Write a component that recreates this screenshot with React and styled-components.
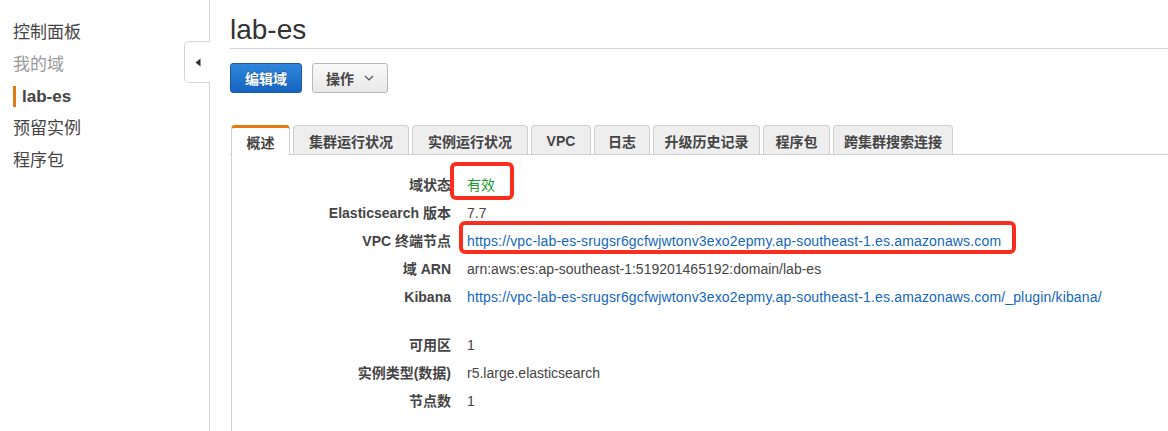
import React from "react";
import styled, { createGlobalStyle } from "styled-components";

const Global = createGlobalStyle`
  html, body { margin: 0; padding: 0; background: #fff; }
  body {
    font-family: "Liberation Sans", "Noto Sans CJK SC", Arial, sans-serif;
    color: #444;
  }
`;

const Page = styled.div`
  display: flex;
  width: 1168px;
  height: 431px;
  overflow: hidden;
`;

const Sidebar = styled.nav`
  position: relative;
  width: 209px;
  flex: none;
  border-right: 1px solid #d5d5d5;
  padding-top: 17px;
  box-sizing: content-box;
`;

const NavItem = styled.div`
  position: relative;
  height: 32px;
  line-height: 32px;
  padding-left: ${(p) => (p.$active ? 22 : 13)}px;
  font-size: 17px;
  font-weight: ${(p) => (p.$active ? 700 : 400)};
  color: ${(p) => (p.$muted ? "#9a9a9a" : "#444")};
  &::before {
    content: "";
    display: ${(p) => (p.$active ? "block" : "none")};
    position: absolute;
    left: 13px;
    top: 5px;
    width: 3px;
    height: 21px;
    background: #e07a12;
  }
`;

const CollapseTab = styled.div`
  position: absolute;
  left: 184px;
  top: 41px;
  width: 26px;
  height: 42px;
  background: #fff;
  border: 1px solid #d5d5d5;
  border-right: none;
  border-radius: 5px 0 0 5px;
  box-sizing: border-box;
  display: flex;
  align-items: center;
  justify-content: center;
`;

const Main = styled.main`
  flex: 1;
  padding-left: 20px;
  min-width: 0;
`;

const Title = styled.h1`
  margin: 0;
  padding-top: 12px;
  line-height: 36px;
  font-size: 28px;
  font-weight: 400;
  color: #333;
  border-bottom: 1px solid #d5d5d5;
`;

const Toolbar = styled.div`
  display: flex;
  gap: 10px;
  margin-top: 14px;
`;

const Button = styled.button`
  height: 30px;
  padding: 0;
  border-radius: 3px;
  font-family: inherit;
  font-size: 14px;
  font-weight: 700;
  white-space: nowrap;
  display: flex;
  align-items: center;
  justify-content: center;
  gap: 10px;
  cursor: pointer;
  color: ${(p) => (p.$primary ? "#fff" : "#444")};
  border: 1px solid ${(p) => (p.$primary ? "#1b5aa3" : "#b8b8b8")};
  background: ${(p) =>
    p.$primary
      ? "linear-gradient(#2f86dc, #1664c0)"
      : "linear-gradient(#fafafa, #e8e8e8)"};
  text-shadow: ${(p) => (p.$primary ? "0 -1px 0 rgba(0,0,0,0.25)" : "none")};
  width: ${(p) => p.$w}px;
`;

const Tabs = styled.div`
  display: flex;
  align-items: flex-end;
  gap: 3px;
  margin-top: 31px;
  padding-left: 1px;
  border-bottom: 1px solid #cfcfcf;
  height: 30px;
`;

const Tab = styled.div`
  height: ${(p) => (p.$active ? 30 : 29)}px;
  box-sizing: border-box;
  width: ${(p) => p.$w}px;
  display: flex;
  align-items: center;
  justify-content: center;
  font-size: 14px;
  font-weight: 700;
  color: #444;
  background: ${(p) => (p.$active ? "#fff" : "#eeeeee")};
  border: 1px solid #cfcfcf;
  border-top: ${(p) => (p.$active ? "3px solid #e57a10" : "1px solid #cfcfcf")};
  border-bottom: none;
  border-radius: 4px 4px 0 0;
  margin-bottom: ${(p) => (p.$active ? -1 : 0)}px;
  padding-top: ${(p) => (p.$active ? 0 : 1)}px;
  position: relative;
`;

const Panel = styled.section`
  margin-left: 1px;
  border-left: 1px solid #cfcfcf;
  padding-top: 16px;
  height: 300px;
`;

const Details = styled.dl`
  margin: 0;
  display: grid;
  grid-template-columns: 219px 1fr;
  column-gap: 16px;
`;

const Label = styled.dt`
  text-align: right;
  font-weight: 700;
  font-size: 14px;
  line-height: 28px;
  color: #444;
  margin-top: ${(p) => (p.$gap ? 20 : 0)}px;
`;

const Value = styled.dd`
  margin: 0;
  font-size: 14px;
  line-height: 28px;
  color: ${(p) => (p.$ok ? "#1c9a35" : "#444")};
  margin-top: ${(p) => (p.$gap ? 20 : 0)}px;
  white-space: nowrap;
`;

const Link = styled.a`
  color: #1466be;
  text-decoration: none;
  letter-spacing: 0.15px;
`;

const Highlight = styled.span`
  position: relative;
  display: inline-block;
  &::after {
    content: "";
    position: absolute;
    top: ${(p) => p.$t}px;
    bottom: ${(p) => p.$b}px;
    left: ${(p) => p.$l}px;
    right: ${(p) => p.$r}px;
    border: 4px solid #fb2d1e;
    border-radius: 6px;
    pointer-events: none;
  }
`;

const nav = [
  { t: "控制面板" },
  { t: "我的域", muted: true },
  { t: "lab-es", active: true },
  { t: "预留实例" },
  { t: "程序包" },
];

const tabs = [
  ["概述", 59, true],
  ["集群运行状况", 116],
  ["实例运行状况", 116],
  ["VPC", 60],
  ["日志", 56],
  ["升级历史记录", 107],
  ["程序包", 67],
  ["跨集群搜索连接", 120],
];

const url =
  "https://vpc-lab-es-srugsr6gcfwjwtonv3exo2epmy.ap-southeast-1.es.amazonaws.com";

export default function App() {
  return (
    <>
      <Global />
      <Page>
        <Sidebar>
          {nav.map((n) => (
            <NavItem key={n.t} $active={n.active} $muted={n.muted}>
              {n.t}
            </NavItem>
          ))}
          <CollapseTab>
            <svg width="6" height="9" viewBox="0 0 6 9">
              <path d="M5.5 0.5 L0.5 4.5 L5.5 8.5 Z" fill="#333" />
            </svg>
          </CollapseTab>
        </Sidebar>
        <Main>
          <Title>lab-es</Title>
          <Toolbar>
            <Button $primary $w={72}>编辑域</Button>
            <Button $w={76}>
              操作
              <svg width="10" height="6" viewBox="0 0 10 6">
                <path d="M1 1 L5 5 L9 1" fill="none" stroke="#555" strokeWidth="1.2" />
              </svg>
            </Button>
          </Toolbar>
          <Tabs>
            {tabs.map(([t, w, a]) => (
              <Tab key={t} $w={w} $active={a}>
                {t}
              </Tab>
            ))}
          </Tabs>
          <Panel>
            <Details>
              <Label>域状态</Label>
              <Value $ok>
                <Highlight $t={-9} $b={-1} $l={-17} $r={-19}>有效</Highlight>
              </Value>
              <Label>Elasticsearch 版本</Label>
              <Value>7.7</Value>
              <Label>VPC 终端节点</Label>
              <Value>
                <Highlight $t={-6} $b={1} $l={-8} $r={-15}>
                  <Link href="#">{url}</Link>
                </Highlight>
              </Value>
              <Label>域 ARN</Label>
              <Value>arn:aws:es:ap-southeast-1:519201465192:domain/lab-es</Value>
              <Label>Kibana</Label>
              <Value>
                <Link href="#">{url}/_plugin/kibana/</Link>
              </Value>
              <Label $gap>可用区</Label>
              <Value $gap>1</Value>
              <Label>实例类型(数据)</Label>
              <Value>r5.large.elasticsearch</Value>
              <Label>节点数</Label>
              <Value>1</Value>
            </Details>
          </Panel>
        </Main>
      </Page>
    </>
  );
}
